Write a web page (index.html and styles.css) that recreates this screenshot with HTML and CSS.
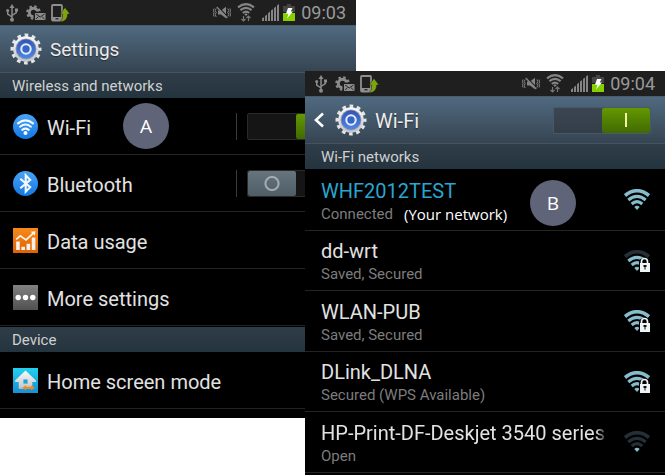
FILE: index.html
```html
<!DOCTYPE html>
<html lang="en">
<head>
<meta charset="utf-8">
<title>Wi-Fi settings</title>
<link rel="stylesheet" href="styles.css">
</head>
<body>
<svg class="sprite" aria-hidden="true">
  <defs>
    <linearGradient id="blue" x1="0" y1="0" x2="0" y2="1"><stop offset="0" stop-color="#4aa4f6"/><stop offset="1" stop-color="#1278e4"/></linearGradient>
    <linearGradient id="orange" x1="0" y1="0" x2="0" y2="1"><stop offset="0" stop-color="#f68a1c"/><stop offset="1" stop-color="#dd6204"/></linearGradient>
    <linearGradient id="grey" x1="0" y1="0" x2="0" y2="1"><stop offset="0" stop-color="#828282"/><stop offset="1" stop-color="#505050"/></linearGradient>
    <linearGradient id="cyan" x1="0" y1="0" x2="0" y2="1"><stop offset="0" stop-color="#22d0ee"/><stop offset="1" stop-color="#168fd6"/></linearGradient>
    <linearGradient id="steel" x1="0" y1="0" x2="0" y2="1"><stop offset="0" stop-color="#fafafa"/><stop offset="1" stop-color="#c2c4c8"/></linearGradient>
    <linearGradient id="ring" x1="0" y1="0" x2="0" y2="1"><stop offset="0" stop-color="#3355b4"/><stop offset="1" stop-color="#4f86e8"/></linearGradient>
    <mask id="lockgap"><rect width="26" height="22" fill="#fff"/><path d="M15 22V13q0-5 5.500-5t5.500 5v9z" fill="#000"/></mask>
  </defs>
  <symbol id="usb" viewBox="0 0 12 18">
    <g fill="none" stroke="#8c8c8c" stroke-width="1.500"><path d="M6 3v12M6 13L1.700 10V7M6 11.500l4.300-3V6"/></g>
    <g fill="#8c8c8c"><path d="M6 0L3.500 4h5z"/><circle cx="6" cy="15.800" r="2"/><circle cx="1.700" cy="6.500" r="1.500"/><path d="M9 4.500h3v3H9z"/></g>
  </symbol>
  <symbol id="gearmail" viewBox="0 0 20 16">
    <circle cx="7.500" cy="7.500" r="6.300" fill="none" stroke="#8c8c8c" stroke-width="2" stroke-dasharray="2.500 2.450"/>
    <circle cx="7.500" cy="7.500" r="4.200" fill="none" stroke="#8c8c8c" stroke-width="3"/>
    <path d="M7.500 6.500H20V16H7.500z" fill="#1f1f1f"/><path d="M9 8h10.500v7H9z" fill="#8c8c8c"/>
    <path d="M10 9l4.200 3L18.500 9M10 14l2.500-2.300M18.500 14L16 11.700" fill="none" stroke="#1f1f1f" stroke-width=".9"/>
  </symbol>
  <symbol id="phoneup" viewBox="0 0 19 18">
    <rect x="1" y="1" width="10" height="15.500" rx="1" fill="none" stroke="#909090" stroke-width="1.800"/>
    <path d="M1 13h10v3.500H1z" fill="#909090"/><path d="M4.500 14.200h3v1.200h-3z" fill="#1f1f1f"/>
    <path d="M14 3.500l5 6.500h-2.300q0 7.500-7.700 8 3.200-2.500 2.700-8H9z" fill="#7da30d" stroke="#1f1f1f" stroke-width=".5"/>
  </symbol>
  <symbol id="mute" viewBox="0 0 18 13">
    <path d="M5 4.500h3L13 .8v11.400L8 8.500H5z" fill="#858585"/>
    <path d="M4.800.5l10.500 11" stroke="#1f1f1f" stroke-width="1.100"/>
    <path d="M3.800 1l10.500 11" fill="none" stroke="#858585" stroke-width="1.300"/>
    <path d="M3.200 2.500l-1 2 1 2-1 2 1 2.500M1 2.500l-.5 2 .5 2-.5 2 .5 2M14.800 2.500l1 2-1 2 1 2-1 2M17 2.500l.5 2-.5 2 .5 2-.5 2" fill="none" stroke="#858585"/>
  </symbol>
  <symbol id="wifistat" viewBox="0 0 18 19">
    <g fill="none" stroke="#858585" stroke-width="2.200"><path d="M1 4.300q8-6.200 16 0M3.400 7.200q5.600-4.500 11.200 0M5.800 10q3.200-2.600 6.400 0"/></g>
    <path d="M7.300 11.300L9 10.300l1.700 1L9 13z" fill="#858585"/>
    <path d="M6.500 13v5M4.500 16l2 2 2-2M11.500 18v-5M9.500 15l2-2 2 2" fill="none" stroke="#777" stroke-width="1.200"/>
  </symbol>
  <symbol id="signal" viewBox="0 0 17 17">
    <path d="M0 14.500l2-1.500v4H0zM3 12l2-1.500V17H3zM6 9.300L8 7.500V17H6zM9 6.500L11 5v12H9zM12 4l2-1.500V17h-2zM15 1.500L17 0v17h-2z" fill="#858585"/>
  </symbol>
  <symbol id="battery" viewBox="0 0 12 17">
    <path d="M4 0h4v2h4v6H0V2h4z" fill="#444"/><path d="M0 9h12v8H0z" fill="#86d000"/>
    <path d="M5 4h4.500L7.800 7.500H10l-6 7 1.500-4.700H3z" fill="#fff"/>
  </symbol>
  <symbol id="gear" viewBox="0 0 32 32">
    <circle cx="16" cy="16" r="13.500" fill="none" stroke="#e4e5e7" stroke-width="4" stroke-dasharray="3.600 3.468" stroke-dashoffset="1.800"/>
    <circle cx="16" cy="16" r="12.800" fill="url(#steel)"/>
    <circle cx="16" cy="16" r="10.500" fill="#9ba2ad"/>
    <circle cx="16" cy="16" r="9.700" fill="url(#ring)"/>
    <circle cx="16" cy="16" r="4.700" fill="#3567c8" stroke="#e9eef6" stroke-width="2"/>
  </symbol>
  <symbol id="wifiround" viewBox="0 0 24 24">
    <circle cx="12" cy="12" r="12" fill="url(#blue)"/>
    <g fill="none" stroke="#f4f8fc" stroke-width="2" stroke-linecap="round"><path d="M4.800 9q7.200-5.800 14.400 0M6.800 12.200q5.200-4.200 10.400 0M8.900 15.200q3.100-2.400 6.200 0"/></g>
    <circle cx="12" cy="18.300" r="1.900" fill="#fff"/>
  </symbol>
  <symbol id="bluetooth" viewBox="0 0 24 24">
    <circle cx="12" cy="12" r="12" fill="url(#blue)"/>
    <path d="M7 7.500l9.500 8-4.300 4.300V4.200l4.300 4.300L7 16.500" fill="none" stroke="#f4f8fc" stroke-width="2"/>
  </symbol>
  <symbol id="chart" viewBox="0 0 24 24">
    <path d="M0 0h24v24H0z" fill="url(#orange)"/>
    <path d="M3 13h3.500v8H3zM8 18h3.500v3H8zM13 15h3.500v6H13zM18 9h3.500v12H18z" fill="#f7efe8"/>
    <path d="M3 11l4-3.500 5.500 4L20 4.500" fill="none" stroke="#fff5ea" stroke-width="1.600"/><path d="M17 3.500l4.500-.5-.5 4.500z" fill="#fff5ea"/>
  </symbol>
  <symbol id="dots" viewBox="0 0 24 24">
    <path d="M0 0h24v24H0z" fill="url(#grey)"/>
    <g fill="#fff"><circle cx="5" cy="12" r="2.600"/><circle cx="12" cy="12" r="2.600"/><circle cx="19" cy="12" r="2.600"/></g>
  </symbol>
  <symbol id="home" viewBox="0 0 24 24">
    <path d="M0 0h24v24H0z" fill="url(#cyan)"/>
    <path d="M12 2.500L22 12v1.500h-3.500V20h-13v-6.500H2V12z" fill="url(#steel)"/>
    <path d="M10 11h4v4h-4z" fill="#1ba4d8"/>
    <path d="M9 19l3.500-2.500V18h5v-1.500L21 19l-3.500 2.500V20h-5v1.500z" fill="#ef8a1a"/>
  </symbol>
  <symbol id="arc4" viewBox="0 0 26 22"><path d="M1 6.500Q13-3 25 6.500" fill="none" stroke="currentColor" stroke-width="3.600"/></symbol>
  <symbol id="arcs" viewBox="0 0 26 22"><path d="M4.300 10.900q8.700-7.200 17.400 0M7.700 15q5.300-4.600 10.600 0" fill="none" stroke="currentColor" stroke-width="3.200"/></symbol>
  <symbol id="tip" viewBox="0 0 26 22"><path d="M10.300 18q2.700-2.400 5.400 0L13 21z" fill="currentColor"/></symbol>
  <symbol id="lock" viewBox="0 0 26 22">
    <path d="M17.500 14v-2.500q0-3 3-3t3 3V14" fill="none" stroke="#eef4f6" stroke-width="1.700"/>
    <path d="M16 13h10v9H16z" fill="#eef4f6"/><path d="M19.500 15h3v2h-1v2.500h-1V17h-1z" fill="#111"/>
  </symbol>
</svg>

<main class="stage">
  <section class="phone phone-settings" aria-label="Settings">
    <div class="status">
      <svg class="i-usb"><use href="#usb"/></svg><svg class="i-mail"><use href="#gearmail"/></svg><svg class="i-phone"><use href="#phoneup"/></svg>
      <span class="fill"></span>
      <svg class="i-mute"><use href="#mute"/></svg><svg class="i-wifi"><use href="#wifistat"/></svg><svg class="i-signal"><use href="#signal"/></svg><svg class="i-battery"><use href="#battery"/></svg>
      <time>09:03</time>
    </div>
    <header class="bar"><svg class="gear"><use href="#gear"/></svg><h1>Settings</h1></header>
    <h2>Wireless and networks</h2>
    <ul class="settings">
      <li><svg class="tile"><use href="#wifiround"/></svg><label for="wifi">Wi-Fi</label><span class="badge badge-a">A</span><span class="control"><input class="switch" type="checkbox" id="wifi" checked></span></li>
      <li><svg class="tile"><use href="#bluetooth"/></svg><label for="bt">Bluetooth</label><span class="control"><input class="switch" type="checkbox" id="bt"></span></li>
      <li><svg class="tile"><use href="#chart"/></svg><a href="#">Data usage</a></li>
      <li><svg class="tile"><use href="#dots"/></svg><a href="#">More settings</a></li>
    </ul>
    <h2>Device</h2>
    <ul class="settings">
      <li><svg class="tile"><use href="#home"/></svg><a href="#">Home screen mode</a></li>
    </ul>
  </section>

  <section class="phone phone-wifi" aria-label="Wi-Fi">
    <div class="status">
      <svg class="i-usb"><use href="#usb"/></svg><svg class="i-mail"><use href="#gearmail"/></svg><svg class="i-phone"><use href="#phoneup"/></svg>
      <span class="fill"></span>
      <svg class="i-mute"><use href="#mute"/></svg><svg class="i-wifi"><use href="#wifistat"/></svg><svg class="i-signal"><use href="#signal"/></svg><svg class="i-battery"><use href="#battery"/></svg>
      <time>09:04</time>
    </div>
    <header class="bar">
      <button class="back" type="button" aria-label="Back"><svg viewBox="0 0 10 16"><path d="M9 1.500L2 8l7 6.500" fill="none" stroke="#fff" stroke-width="2.600"/></svg></button>
      <svg class="gear"><use href="#gear"/></svg><h1><label for="power">Wi-Fi</label></h1>
      <input class="switch" type="checkbox" id="power" checked>
    </header>
    <h2>Wi-Fi networks</h2>
    <ul class="networks">
      <li class="active"><a href="#"><span class="name">WHF2012TEST</span><span class="state">Connected <span class="note">(Your network)</span></span></a><span class="badge badge-b">B</span>
        <svg class="strength"><use href="#arc4"/><use href="#arcs"/><use href="#tip"/></svg></li>
      <li><a href="#"><span class="name">dd-wrt</span><span class="state">Saved, Secured</span></a>
        <svg class="strength"><g mask="url(#lockgap)"><use class="off" href="#arc4"/><use href="#arcs"/><use href="#tip"/></g><use href="#lock"/></svg></li>
      <li><a href="#"><span class="name">WLAN-PUB</span><span class="state">Saved, Secured</span></a>
        <svg class="strength"><g mask="url(#lockgap)"><use href="#arc4"/><use href="#arcs"/><use href="#tip"/></g><use href="#lock"/></svg></li>
      <li><a href="#"><span class="name">DLink_DLNA</span><span class="state">Secured (WPS Available)</span></a>
        <svg class="strength"><g mask="url(#lockgap)"><use href="#arc4"/><use href="#arcs"/><use href="#tip"/></g><use href="#lock"/></svg></li>
      <li><a href="#"><span class="name faded">HP-Print-DF-Deskjet 3540 series</span><span class="state">Open</span></a>
        <svg class="strength"><use class="off" href="#arc4"/><use class="off" href="#arcs"/><use href="#tip"/></svg></li>
    </ul>
  </section>
</main>
</body>
</html>
```
FILE: styles.css
```css
* { box-sizing: border-box; }
body { margin: 0; background: #fff; font-family: Roboto, "Liberation Sans", sans-serif; color: #e2e2e2; }
h1, h2, ul { margin: 0; padding: 0; font-weight: 400; }
ul { list-style: none; }
a { color: inherit; text-decoration: none; }
svg { flex: none; display: block; }
.sprite { position: absolute; width: 0; height: 0; }

.stage { display: grid; grid-template-columns: 305fr 51fr 309fr; align-items: start; min-height: 100vh; overflow: hidden; }
.phone { grid-row: 1; background: #000; min-width: 0; }
.phone-settings { grid-column: 1 / 3; padding-bottom: 9px; }
.phone-wifi { grid-column: 2 / 4; margin-top: 71px; align-self: stretch; z-index: 1; }

.status { display: flex; align-items: center; height: 25px; padding: 0 10px 0 6px; background: #1f1f1f; color: #9a9a9a; font-size: 18px; line-height: 24px; }
.phone-wifi .status { padding-left: 10px; }
.fill { flex: 1; }
.i-usb { width: 12px; height: 18px; margin-right: 8px; }
.i-mail { width: 20px; height: 16px; margin-right: 5px; }
.i-phone { width: 19px; height: 18px; }
.i-mute { width: 18px; height: 13px; margin-right: 6px; }
.i-wifi { width: 18px; height: 19px; margin-right: 7px; }
.i-signal { width: 17px; height: 17px; margin-right: 4px; }
.i-battery { width: 12px; height: 17px; margin-right: 6px; }

.bar { display: flex; align-items: center; height: 48px; padding: 0 14px 0 10px; background: linear-gradient(#506a80, #364451); border-top: 1px solid #4a5b6a; border-bottom: 1px solid #43535f; }
.phone-wifi .bar { padding-left: 8px; }
.bar h1 { flex: 1; margin-left: 8px; padding-top: 2px; font-size: 19px; line-height: 24px; color: #ececec; text-shadow: 0 1px 1px #222c; }
.phone-wifi h1 { font-size: 20px; }
.gear { width: 32px; height: 32px; }
.back { width: 12px; height: 32px; margin-right: 10px; padding: 0; border: 0; background: none; }
.back svg { width: 12px; height: 16px; }

h2 { height: 25px; padding-left: 12px; background: linear-gradient(#2f3d48, #24343e); font-size: 15px; line-height: 26px; color: #d0d0d0; }
.phone-wifi h2 { padding-left: 16px; }

.settings li { position: relative; display: flex; align-items: center; height: 57px; padding: 0 11px 0 13px; border-bottom: 1px solid #242424; font-size: 20px; line-height: 24px; }
.settings + h2 { margin-top: 1px; }
.settings label, .settings a { flex: 1; padding-top: 4px; }
.tile { width: 25px; height: 25px; margin-right: 9px; }
.control { display: flex; padding-left: 10px; border-left: 1px solid #3a3a3a; }

.switch { appearance: none; display: flex; flex: none; width: 98px; height: 27px; margin: 0; background: #151515; border: 1px solid #2a2a2a; border-radius: 2px; }
.bar .switch { background: linear-gradient(#3b4652, #333e48); border-color: #485866; }
.switch::before { content: ""; display: block; width: 48px; height: 25px; border-radius: 2px; background: radial-gradient(circle at center, #0000 5px, #a5adb2 6px, #a5adb2 7px, #0000 8px), linear-gradient(#66747d, #4f5d66); }
.switch:checked::before { margin-left: auto; background: linear-gradient(#f2f5a0, #f2f5a0) center / 2px 14px no-repeat, linear-gradient(#639802, #416a02); }

.badge { position: absolute; width: 46px; height: 46px; border-radius: 50%; background: #5f6478; color: #fff; font: 19px/46px "Open Sans", sans-serif; text-align: center; }
.badge-a { left: 123px; top: 5px; }
.badge-b { right: 89px; top: 10px; }

.networks { padding-top: 1px; }
.networks li { position: relative; display: flex; align-items: center; height: 60px; padding: 0 15px 0 16px; border-bottom: 1px solid #242424; }
.networks li:nth-child(odd) { height: 61px; }
.networks a { flex: 1; min-width: 0; padding-top: 3px; }
.name { display: block; font-size: 20px; line-height: 24px; white-space: nowrap; overflow: hidden; }
.faded { margin-right: 16px; -webkit-mask-image: linear-gradient(to left, transparent, #000 12px); mask-image: linear-gradient(to left, transparent, #000 12px); }
.active .name { color: #2ba5cf; }
.state { display: flex; gap: 11px; font-size: 15px; line-height: 22px; color: #7c7c7c; }
.note { color: #fff; font-family: "Open Sans", sans-serif; font-size: 15px; }
.strength { width: 26px; height: 22px; color: #86bccb; }
.off { color: #242f38; }
```
